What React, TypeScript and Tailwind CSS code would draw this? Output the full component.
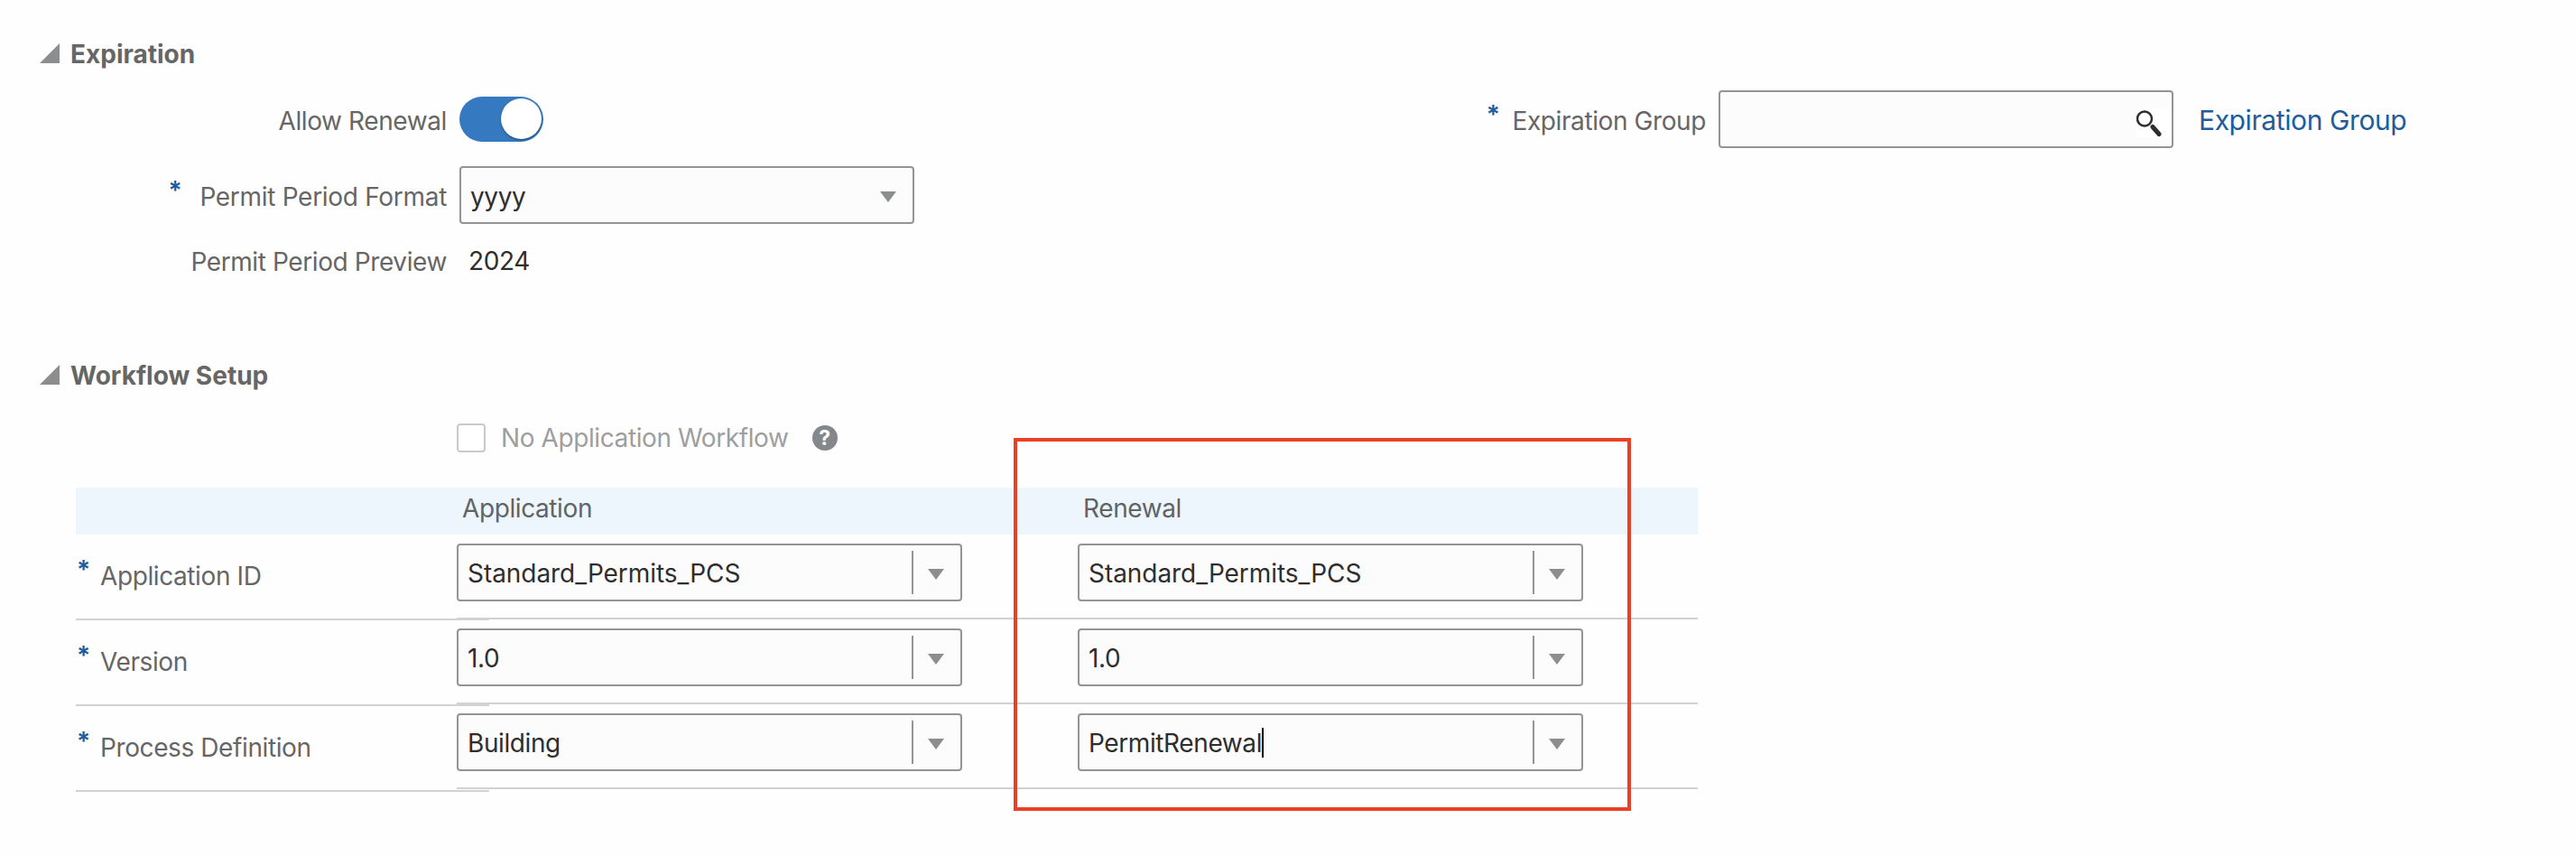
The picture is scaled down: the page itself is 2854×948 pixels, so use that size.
import clsx from "clsx";

/* ── data ── */

interface WorkflowRow {
  label: string;
  application: string;
  renewal: string;
  /** shows the text cursor after the renewal value */
  editing?: boolean;
}

const workflowRows: WorkflowRow[] = [
  {
    label: "Application ID",
    application: "Standard_Permits_PCS",
    renewal: "Standard_Permits_PCS",
  },
  { label: "Version", application: "1.0", renewal: "1.0" },
  {
    label: "Process Definition",
    application: "Building",
    renewal: "PermitRenewal",
    editing: true,
  },
];

/* ── small parts ── */

function Required({ className }: { className?: string }) {
  return (
    <span className={clsx("leading-9 font-semibold text-[#205c9c]", className)}>
      *
    </span>
  );
}

function DownArrow() {
  return (
    <svg width="18" height="12" viewBox="0 0 18 12" className="shrink-0">
      <path d="M0 0h18L9 12z" fill="#8b8d8f" />
    </svg>
  );
}

function SectionTitle({ title }: { title: string }) {
  return (
    <div className="flex h-9 items-start gap-3 pl-11">
      <svg width="22" height="22" viewBox="0 0 22 22" className="mt-1.5">
        <path d="M22 0v22H0z" fill="#8b8d8f" />
      </svg>
      <h2 className="leading-9 font-bold tracking-normal">{title}</h2>
    </div>
  );
}

function Combo({ value, editing }: { value: string; editing?: boolean }) {
  return (
    <div className="flex h-16 w-[560px] items-center rounded-[4px] border-2 border-[#949494] bg-[#fcfcfc] pl-[10px] text-[#2e2e2e]">
      <span
        className={clsx(
          "mt-0.5 leading-9",
          value.includes("_") && "tracking-[-0.05px]",
        )}
      >
        {value}
      </span>
      {editing && <span className="h-[33px] w-0.5 bg-black" />}
      <span className="ml-auto h-12 w-0.5 bg-[#949494]" />
      <span className="mt-1 flex w-[52px] justify-center pr-0.5">
        <DownArrow />
      </span>
    </div>
  );
}

/* ── sections ── */

function Expiration() {
  return (
    <section>
      <SectionTitle title="Expiration" />
      <div className="mt-[22px] flex">
        <div className="w-[1640px]">
          <div className="flex h-16 items-center gap-[14px]">
            <span className="mt-1 w-[495px] text-right leading-9">
              Allow Renewal
            </span>
            <span className="flex h-[50px] w-[93px] justify-end rounded-full bg-[#3579c0] p-0.5">
              <span className="size-[45px] rounded-full bg-white shadow-[0_1px_2px_rgba(0,0,0,0.45)]" />
            </span>
          </div>
          <div className="mt-5 flex h-16 items-start gap-[14px]">
            <span className="flex w-[495px] justify-end gap-[20px] tracking-[-0.3px]">
              <Required className="mt-[9px]" />
              <span className="mt-4 leading-9">Permit Period Format</span>
            </span>
            <div className="flex h-16 w-[504px] items-center justify-between rounded-[4px] border-2 border-[#949494] bg-[#fcfcfc] pr-[18px] pl-[10px] text-[#2e2e2e]">
              <span className="mt-1 leading-9">yyyy</span>
              <span className="mt-1">
                <DownArrow />
              </span>
            </div>
          </div>
          <div className="mt-6 flex h-9 gap-6 leading-9">
            <span className="w-[495px] text-right">Permit Period Preview</span>
            <span className="-mt-px text-[#2e2e2e]">2024</span>
          </div>
        </div>

        <div className="flex h-16 items-start">
          <span className="flex w-[250px] justify-end gap-[14px] whitespace-nowrap">
            <Required className="mt-[9px]" />
            <span className="mt-4 leading-9">Expiration Group</span>
          </span>
          <div className="ml-[14px] flex h-16 w-[504px] items-center justify-end rounded-[4px] border-2 border-[#949494] bg-[#fcfcfc]">
            <svg
              width="37"
              height="32"
              viewBox="0 0 37 32"
              className="mt-2 mr-[2px] bg-white"
              fill="none"
              stroke="#2e2e2e"
            >
              <circle cx="9" cy="11.5" r="8" strokeWidth="2.5" />
              <path d="M18 20.5l7 8" strokeWidth="5" strokeLinecap="round" />
            </svg>
          </div>
          <a className="mt-[15px] ml-7 text-[30px] leading-9 text-[#205c9c]">
            Expiration Group
          </a>
        </div>
      </div>
    </section>
  );
}

function WorkflowSetup() {
  return (
    <section className="mt-[90px]">
      <SectionTitle title="Workflow Setup" />

      <div className="mt-[33px] flex h-9 items-center pl-[506px] text-[#9e9e9e]">
        <span className="size-8 rounded-[4px] border-2 border-[#c9c9c9] bg-white" />
        <span className="ml-[17px] leading-9">No Application Workflow</span>
        <span className="ml-[26px] flex size-7 items-center justify-center rounded-full bg-[#84888d] text-[23px] leading-none font-bold text-white">
          ?
        </span>
      </div>

      <div className="mt-[37px] ml-[84px] w-[1797px]">
        <div className="flex h-[52px] bg-[#edf5fd] pt-[5px] pl-[428px] leading-9 text-[#5f6468]">
          <span className="w-[688px]">Application</span>
          <span>Renewal</span>
        </div>
        <div className="flex items-start">
          {/* the label column runs slightly under the value columns */}
          <div className="-mr-9 w-[458px] shrink-0">
            {workflowRows.map((row) => (
              <div
                key={row.label}
                className="flex h-[95px] items-start border-b-2 border-[#d2d2d2] pl-px"
              >
                <Required className="mt-[21px] w-[26px]" />
                <span className="mt-7 leading-9">{row.label}</span>
              </div>
            ))}
          </div>
          <div className="grow">
            {workflowRows.map((row) => (
              <div
                key={row.label}
                className="flex h-[94px] gap-32 border-b-2 border-[#d2d2d2] pt-2.5"
              >
                <Combo value={row.application} />
                <Combo value={row.renewal} editing={row.editing} />
              </div>
            ))}
          </div>
        </div>
      </div>
    </section>
  );
}

export default function App() {
  return (
    <main className="relative h-[948px] w-[2854px] overflow-hidden bg-[#fefefe] pt-[42px] font-['Inter','Liberation_Sans',sans-serif] text-[28px] tracking-[-0.4px] text-[#666666]">
      <Expiration />
      <WorkflowSetup />
      {/* highlight around the renewal column */}
      <div className="absolute top-[485px] left-[1123px] h-[413px] w-[684px] border-4 border-[#ea4025]" />
    </main>
  );
}
